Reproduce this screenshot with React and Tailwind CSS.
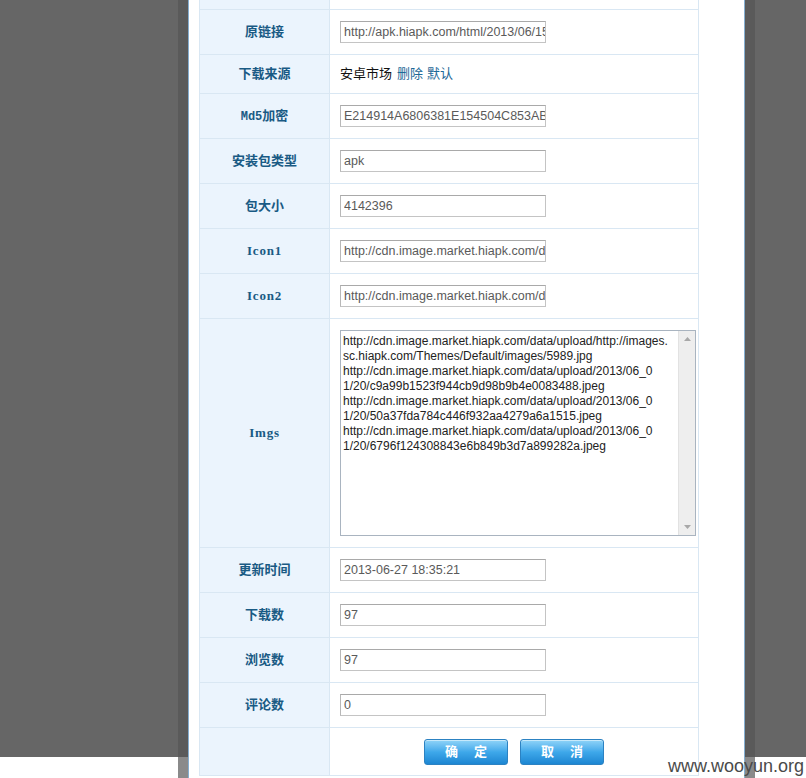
import React from 'react';

const font = "font-['Liberation_Sans','Noto_Sans_CJK_SC',sans-serif]";

// one table row: label cell on the left, value cell on the right
function Row({ label, h, labelClass = '', children }) {
    return (
        <div className={`flex border-b border-[#d9e7f3] ${h}`}>
            <div
                className={`w-[130px] shrink-0 bg-[#ebf4fd] border-r border-[#d9e7f3] flex items-center justify-center text-[13px] font-bold text-[#195a84] ${labelClass}`}
            >
                {label}
            </div>
            <div className="flex-1 flex items-center pl-[10px]">{children}</div>
        </div>
    );
}

function Field({ value }) {
    return (
        <input
            readOnly
            value={value}
            className={`w-[206px] h-[22px] border border-[#c4c4c4] border-t-[#a9a9a9] border-l-[#b8b8b8] bg-white pl-[3px] text-[12.5px] text-[#5a5a5a] outline-none ${font}`}
        />
    );
}

const imgLines = [
    'http://cdn.image.market.hiapk.com/data/upload/http://images.',
    'sc.hiapk.com/Themes/Default/images/5989.jpg',
    'http://cdn.image.market.hiapk.com/data/upload/2013/06_0',
    '1/20/c9a99b1523f944cb9d98b9b4e0083488.jpeg',
    'http://cdn.image.market.hiapk.com/data/upload/2013/06_0',
    '1/20/50a37fda784c446f932aa4279a6a1515.jpeg',
    'http://cdn.image.market.hiapk.com/data/upload/2013/06_0',
    '1/20/6796f124308843e6b849b3d7a899282a.jpeg',
];

function ImgsBox() {
    return (
        <div className="w-[356px] h-[206px] border border-[#a9b4c0] bg-white flex">
            <div className="flex-1 pl-[2px] pt-[3px] overflow-hidden text-[12px] leading-[15px] text-[#222] whitespace-nowrap">
                {imgLines.map((l, i) => (
                    <div key={i}>{l}</div>
                ))}
            </div>
            {/* scrollbar */}
            <div className="w-[17px] bg-[#eeeeee] border-l border-[#e2e2e2] flex flex-col justify-between items-center py-[6px]">
                <svg width="7" height="4" viewBox="0 0 7 4">
                    <path d="M0 4 L3.5 0 L7 4 Z" fill="#a8a8a8" />
                </svg>
                <svg width="7" height="4" viewBox="0 0 7 4">
                    <path d="M0 0 L3.5 4 L7 0 Z" fill="#a8a8a8" />
                </svg>
            </div>
        </div>
    );
}

function BlueButton({ a, b }) {
    return (
        <button className="w-[84px] h-[26px] rounded-[3px] border border-[#2c82c2] bg-linear-to-b from-[#8fd4f8] via-[#3ea8ea] to-[#1c86d2] flex items-center justify-center gap-[16px] text-white text-[13px] font-bold shadow-[inset_0_1px_0_rgba(255,255,255,0.5)]">
            <span>{a}</span>
            <span>{b}</span>
        </button>
    );
}

export default function App() {
    return (
        <div className={`relative w-[806px] h-[778px] overflow-hidden bg-white ${font}`}>
            {/* page overlay */}
            <div className="absolute left-0 top-0 w-full h-[757px] bg-[#666666]" />

            {/* dialog */}
            <div className="absolute left-[178px] top-0 w-[577px] h-[778px] bg-[rgba(86,86,86,0.69)] px-[10px]">
                <div className="h-full bg-white border-x border-[#85aed0] pl-[10px]">
                    <div className="w-[500px] border-x border-b border-[#d9e7f3]">
                        <Row label="" h="h-[10px]" />
                        <Row label="原链接" h="h-[45px]">
                            <Field value="http://apk.hiapk.com/html/2013/06/1554037.html" />
                        </Row>
                        <Row label="下载来源" h="h-[39px]">
                            <span className="text-[13px] text-[#111]">安卓市场</span>
                            <span className="text-[13px] text-[#1d6897] ml-[5px]">删除</span>
                            <span className="text-[13px] text-[#1d6897] ml-[4px]">默认</span>
                        </Row>
                        <Row
                            label={
                                <span>
                                    <span className="font-['Liberation_Mono',monospace] text-[12px]">Md5</span>加密
                                </span>
                            }
                            h="h-[45px]"
                        >
                            <Field value="E214914A6806381E154504C853AB2F70" />
                        </Row>
                        <Row label="安装包类型" h="h-[45px]">
                            <Field value="apk" />
                        </Row>
                        <Row label="包大小" h="h-[45px]">
                            <Field value="4142396" />
                        </Row>
                        <Row
                            label="Icon1"
                            h="h-[45px]"
                            labelClass="font-['Liberation_Serif',serif] text-[12px] tracking-[0.8px]"
                        >
                            <Field value="http://cdn.image.market.hiapk.com/data/upload/icon1.png" />
                        </Row>
                        <Row
                            label="Icon2"
                            h="h-[45px]"
                            labelClass="font-['Liberation_Serif',serif] text-[12px] tracking-[0.8px]"
                        >
                            <Field value="http://cdn.image.market.hiapk.com/data/upload/icon2.png" />
                        </Row>
                        <Row
                            label="Imgs"
                            h="h-[229px]"
                            labelClass="font-['Liberation_Serif',serif] text-[12px] tracking-[0.8px]"
                        >
                            <ImgsBox />
                        </Row>
                        <Row label="更新时间" h="h-[45px]">
                            <Field value="2013-06-27 18:35:21" />
                        </Row>
                        <Row label="下载数" h="h-[45px]">
                            <Field value="97" />
                        </Row>
                        <Row label="浏览数" h="h-[45px]">
                            <Field value="97" />
                        </Row>
                        <Row label="评论数" h="h-[45px]">
                            <Field value="0" />
                        </Row>
                        <div className="flex h-[47px]">
                            <div className="w-[130px] shrink-0 bg-[#ebf4fd] border-r border-[#d9e7f3]" />
                            <div className="flex-1 flex items-center justify-center gap-[12px] pt-[1px]">
                                <BlueButton a="确" b="定" />
                                <BlueButton a="取" b="消" />
                            </div>
                        </div>
                    </div>
                </div>
            </div>

            {/* watermark */}
            <div className="absolute right-[2px] top-[757px] text-[18px] leading-[18px] text-[#4a4a4a]">
                www.wooyun.org
            </div>
        </div>
    );
}
